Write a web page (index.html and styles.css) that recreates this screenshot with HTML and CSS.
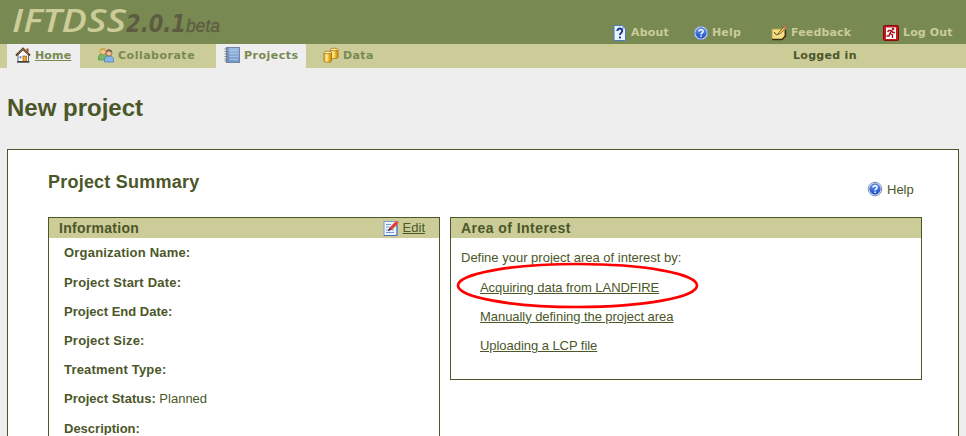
FILE: index.html
```html
<!DOCTYPE html>
<html lang="en">
<head>
<meta charset="utf-8">
<title>IFTDSS</title>
<link rel="stylesheet" href="styles.css">
</head>
<body>
<svg class="defs" width="0" height="0">
  <defs>
    <linearGradient id="blue" x1="0" y1="0" x2="0" y2="1"><stop offset="0" stop-color="#6d9df0"/><stop offset="1" stop-color="#164bc4"/></linearGradient>
    <linearGradient id="gold" x1="0" y1="0" x2="1" y2="0"><stop offset="0" stop-color="#e8a020"/><stop offset=".35" stop-color="#fff2b0"/><stop offset=".6" stop-color="#f8c020"/><stop offset="1" stop-color="#c88400"/></linearGradient>
    <linearGradient id="book" x1="0" y1="0" x2="0" y2="1"><stop offset="0" stop-color="#9bbbe2"/><stop offset="1" stop-color="#7197ca"/></linearGradient>
    <symbol id="help" viewBox="0 0 16 16">
      <circle cx="8" cy="8" r="6.800" fill="#e4ebf8" stroke="#7e91b5"/>
      <circle cx="8" cy="8" r="5.300" fill="url(#blue)" stroke="#1e51c0" stroke-width=".6"/>
      <path d="M6 6.600C6 4.300 10.100 4.200 10.100 6.400C10.100 7.900 8.100 7.800 8.100 9.500M8.100 10.600V12" fill="none" stroke="#fff" stroke-width="1.500"/>
    </symbol>
  </defs>
</svg>
<header class="banner">
  <svg class="logo" width="232" height="44">
    <text class="logo-name" x="12" y="32" textLength="114" lengthAdjust="spacingAndGlyphs">IFTDSS</text>
    <text class="logo-version" x="126" y="32" textLength="60" lengthAdjust="spacingAndGlyphs">2.0.1</text>
    <text class="logo-beta" x="186" y="32" textLength="34" lengthAdjust="spacingAndGlyphs">beta</text>
  </svg>
  <nav class="tools">
    <a class="tool about"><svg width="16" height="16" viewBox="0 0 16 16"><path d="M2 .5H10L13.500 4V15.500H2Z" fill="#e9f2ff" stroke="#4f78b8"/><path d="M10 .5V4H13.500Z" fill="#9fbce8"/><path d="M5.300 6C5.300 2.700 10.500 2.900 10.200 6C10.100 7.800 7.900 8 7.900 10.100M7.900 11.500V13.500" fill="none" stroke="#183b86" stroke-width="2"/></svg>About</a>
    <a class="tool help"><svg width="16" height="16"><use href="#help"/></svg>Help</a>
    <a class="tool feedback"><svg width="16" height="16" viewBox="0 0 16 16"><path d="M1 4H14V11L11 14.500H1Z" fill="#f5df82" stroke="#b39a4d"/><path d="M1 14.500H11L14.500 11V5" fill="none" stroke="#3c2f12" stroke-width="1.500"/><path d="M3 7L5.500 10L7.500 8.500" fill="none" stroke="#51431c"/><path d="M7 9.500L8 7L13 2L14.500 3.500L9.500 8.500Z" fill="#f1bd55" stroke="#5d4b2c" stroke-width=".7"/><path d="M12.500 2L14 .5L15.500 2L14.300 3.500Z" fill="#e8655a"/></svg>Feedback</a>
    <a class="tool logout"><svg width="16" height="16" viewBox="0 0 16 16"><rect x=".5" y=".5" width="15" height="15" rx="1" fill="#c31a20" stroke="#86090e"/><rect x="3" y="2.500" width="10" height="11.500" fill="#fff"/><circle cx="10" cy="4" r="1.300" fill="#b51218"/><path d="M4.500 7L6 5.200L8.500 5.700L7 8.500L9.500 10V13M8.500 5.500L9.800 7.500H12M6.800 8.500L6 11H3.500" fill="none" stroke="#b51218" stroke-width="1.400"/></svg>Log Out</a>
  </nav>
</header>
<div class="tabs">
  <a class="tab home active"><svg width="16" height="16" viewBox="0 0 16 16"><path d="M3 8L8 3L13.500 8V14.500H3Z" fill="#fff" stroke="#5c6067"/><path d="M1 8.500L8 1.500L15 8.500" fill="none" stroke="#513a25" stroke-width="1.800"/><path d="M2.500 7.200L8 1.800L13.500 7.200" fill="none" stroke="#d69548" stroke-width=".7"/><path d="M11.500 1.500H13.500V5.500L11.500 4Z" fill="#9a482e"/><rect x="8" y="9" width="3.500" height="5.500" fill="#eda928" stroke="#92591a" stroke-width=".7"/><rect x="4.500" y="9" width="2" height="2.500" fill="#7899c9"/><path d="M2 15H14.500" stroke="#222" stroke-width="1.200"/></svg><u>Home</u></a>
  <a class="tab collaborate"><svg width="16" height="16" viewBox="0 0 16 16"><path d="M.5 13V10C.5 6 9 6 9 10V13Z" fill="#77b86a" stroke="#508b49" stroke-width=".7"/><circle cx="5" cy="4.500" r="3" fill="#f1c797" stroke="#b87e31" stroke-width=".7"/><path d="M2 4C2 0 8 0 8 4L5 3Z" fill="#d7a548"/><path d="M6.500 15V12C6.500 8 15.500 8 15.500 12V15Z" fill="#83b5e9" stroke="#4c7bad" stroke-width=".7"/><circle cx="11" cy="6" r="3" fill="#efbd94" stroke="#785237" stroke-width=".7"/><path d="M8 5.500C7.500 1 14.500 1 14 5.500L11 4.300Z" fill="#7f5f50"/></svg>Collaborate</a>
  <a class="tab projects active"><svg width="16" height="16" viewBox="0 0 16 16"><rect x="2.500" y=".5" width="13" height="15" fill="url(#book)" stroke="#7284a0"/><path d="M4 1V15" stroke="#6d83a8"/><path d="M5.500 3.500H14M5.500 6.500H14M5.500 9.500H14M5.500 12.500H14" stroke="#a5c1e4"/><path d="M.5 2H4M.5 4.500H4M.5 7H4M.5 9.500H4M.5 12H4M.5 14H4" stroke="#777f8d"/></svg>Projects</a>
  <a class="tab data"><svg width="16" height="16" viewBox="0 0 16 16"><path d="M7.500 2.500V10.500C7.500 12 15 12 15 10.500V2.500Z" fill="url(#gold)" stroke="#a77518" stroke-width=".8"/><ellipse cx="11.250" cy="2.500" rx="3.750" ry="1.300" fill="#ffe99a" stroke="#a77518" stroke-width=".8"/><path d="M1 5.500V14C1 15.700 8.500 15.700 8.500 14V5.500Z" fill="url(#gold)" stroke="#a77518" stroke-width=".8"/><ellipse cx="4.750" cy="5.500" rx="3.750" ry="1.300" fill="#fff0b2" stroke="#a77518" stroke-width=".8"/></svg>Data</a>
  <span class="session">Logged in</span>
</div>
<main>
  <h1>New project</h1>
  <section class="sheet">
    <div class="sheet-head">
      <h2>Project Summary</h2>
      <a class="sheet-help"><svg width="16" height="16"><use href="#help"/></svg>Help</a>
    </div>
    <div class="panels">
      <section class="panel info">
        <div class="panel-title"><h3>Information</h3><a class="edit"><svg width="16" height="16" viewBox="0 0 16 16"><rect x="1" y="1.500" width="13" height="14" fill="#edf5ff" stroke="#7b9cd0"/><path d="M1 15.500H14V5" fill="none" stroke="#456fb4"/><path d="M3 4.500H8M3 7H6M3 12.500H11M3 10H6M9 10H11" stroke="#7598cc"/><path d="M5.500 10.500L7 7.500L12.500 2L14.500 4L9 9.300Z" fill="#e63d2c" stroke="#a82e22" stroke-width=".6"/><path d="M5 11L6.500 8L8.500 9.800Z" fill="#283d65"/><path d="M12.500 2L14 .5L16 2.500L14.500 4Z" fill="#f4573b"/></svg><u>Edit</u></a></div>
        <div class="fields">
          <div class="wide"><b>Organization Name:</b></div>
          <div class="wide"><b>Project Start Date:</b></div>
          <div><b>Project End Date:</b></div>
          <div class="wide"><b>Project Size:</b></div>
          <div class="wide"><b>Treatment Type:</b></div>
          <div><b>Project Status:</b> Planned</div>
          <div><b>Description:</b></div>
        </div>
      </section>
      <section class="panel area">
        <div class="panel-title"><h3>Area of Interest</h3></div>
        <div class="choices">
          <p>Define your project area of interest by:</p>
          <a class="acquire">Acquiring data from LANDFIRE</a>
          <a class="manual">Manually defining the project area</a>
          <a class="upload">Uploading a LCP file</a>
        </div>
        <svg class="ring" width="244" height="48"><ellipse cx="121.500" cy="24.500" rx="119.500" ry="21.500"/></svg>
      </section>
    </div>
  </section>
</main>
</body>
</html>
```
FILE: styles.css
```css
* { box-sizing: border-box; }
body { display: flex; flex-direction: column; margin: 0; height: 436px; overflow: hidden; background: #eee; color: #4b5729; font: 13px "Liberation Sans", Arial, sans-serif; }
svg { flex: none; }
.defs { position: absolute; }
.banner { display: flex; flex: none; height: 44px; background: #788a52; }
.logo { overflow: visible; }
.logo-name { font: italic 600 32px "Open Sans", sans-serif; fill: #cccc99; }
.logo-version { font: italic bold 24px "DejaVu Sans", sans-serif; fill: #5d5c43; }
.logo-beta { font: italic 19px "Liberation Sans", sans-serif; fill: #5d5c43; stroke: #5d5c43; stroke-width: .3px; }
.tools { display: flex; flex: 1; padding: 25px 0 0 380px; }
.tool, .tab, .session { font: bold 11px/16px "DejaVu Sans", Verdana, sans-serif; letter-spacing: .15px; }
.tool { display: flex; gap: 3px; height: 16px; color: #cccc99; white-space: nowrap; }
.about { width: 81px; }
.tools .help { width: 78px; }
.feedback { width: 112px; }
.feedback, .logout { gap: 4px; }
.tabs { display: flex; flex: none; height: 24px; padding-left: 7px; background: #cccc99; }
.tab { display: flex; gap: 4px; height: 24px; padding: 4px 0 0 8px; color: #788a52; }
.tab svg { margin-top: -1px; }
.active { background: #eee; }
.home { width: 73px; }
.collaborate { width: 136px; padding-left: 18px; letter-spacing: .5px; }
.projects { width: 90px; letter-spacing: .5px; }
.data { width: 120px; padding-left: 17px; letter-spacing: .4px; }
.session { margin-left: 367px; padding-top: 4px; letter-spacing: .3px; }
h1, h2, h3, p { margin: 0; }
main { display: flex; flex-direction: column; flex: 1; min-height: 0; padding: 24px 7px 0; }
h1 { flex: none; font-size: 24px; line-height: 30px; height: 57px; padding-top: 1px; }
.sheet { flex: 1; min-height: 0; display: flex; flex-direction: column; border: 1px solid #4b5729; border-bottom: 0; background: #fff; padding: 17px 36px 0 40px; }
.sheet-head { display: flex; flex: none; justify-content: space-between; height: 50px; }
h2 { font-size: 18px; line-height: 28px; padding-top: 1px; letter-spacing: .22px; }
.sheet-help { display: flex; gap: 4px; width: 55px; margin-top: 14px; line-height: 18px; }
.panels { display: flex; flex: 1; min-height: 0; gap: 10px; }
.panel { position: relative; border: 1px solid #4b5729; }
.info { width: 392px; border-bottom: 0; }
.area { width: 472px; height: 163px; }
.panel-title { display: flex; justify-content: space-between; height: 20px; padding: 0 14px 0 10px; background: #cccc99; line-height: 20px; }
h3 { font-size: 14px; letter-spacing: .28px; }
.area h3 { letter-spacing: .45px; }
.edit { display: flex; gap: 4px; }
.edit svg { margin-top: 2px; }
.fields { height: 197px; padding: .4px 0 0 15px; line-height: 29.2px; overflow: hidden; }
.fields .wide { letter-spacing: .2px; }
.choices { display: flex; flex-direction: column; align-items: flex-start; padding: 5.4px 0 0 10px; line-height: 29.2px; }
.choices a { margin-left: 19px; text-decoration: underline; letter-spacing: -.05px; }
.ring { position: absolute; left: 5px; top: 43px; overflow: visible; }
.ring ellipse { fill: none; stroke: #f00; stroke-width: 2.7px; }
```
